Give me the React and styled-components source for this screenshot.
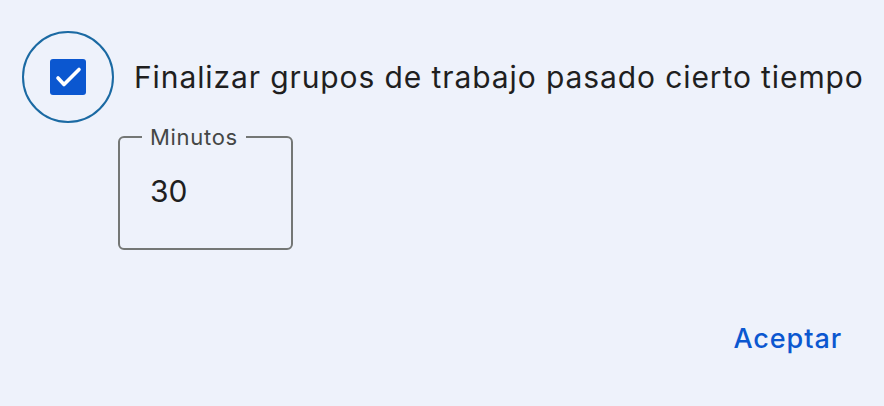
import React from "react";
import styled, { createGlobalStyle } from "styled-components";

const Global = createGlobalStyle`
  html, body { margin: 0; padding: 0; background: #eef2fb; }
  body { font-family: Inter, Roboto, sans-serif; color: #1f1f1f; }
  * { box-sizing: border-box; }
`;

const Page = styled.div`
  width: 884px;
  height: 406px;
  padding: 31px 0 0 22px;
  display: flex;
  flex-direction: column;
`;

const Row = styled.label`
  display: flex;
  align-items: center;
  gap: 20px;
  cursor: pointer;
`;

const Halo = styled.span`
  width: 92px;
  height: 92px;
  border-radius: 50%;
  border: 2px solid #1b6aa3;
  display: flex;
  align-items: center;
  justify-content: center;
  flex-shrink: 0;
`;

const Box = styled.span`
  width: 36px;
  height: 36px;
  border-radius: 3px;
  background: #0b57d0;
  display: block;
`;

const LabelText = styled.span`
  font-size: 30px;
  line-height: 40px;
  letter-spacing: 0.9px;
  color: #1f1f1f;
`;

const Field = styled.fieldset`
  margin: 2px 0 0 96px;
  width: 175px;
  height: 125px;
  border: 2px solid #747775;
  border-radius: 6px;
  padding: 0 0 0 22px;
`;

const Legend = styled.legend`
  padding: 0 8px;
  font-size: 22px;
  line-height: 24px;
  letter-spacing: 0.7px;
  color: #444746;
`;

const Value = styled.div`
  margin: 22px 0 0 8px;
  font-size: 30px;
  line-height: 40px;
  color: #1f1f1f;
`;

const Actions = styled.div`
  display: flex;
  justify-content: flex-end;
  padding-right: 30px;
  margin-top: 64px;
`;

const TextButton = styled.button`
  background: none;
  border: none;
  padding: 0 12px;
  height: 48px;
  font-family: Inter, Roboto, sans-serif;
  font-weight: 500;
  font-size: 27px;
  letter-spacing: 0.9px;
  color: #0b57d0;
  cursor: pointer;
`;

export default function App() {
  return (
    <>
      <Global />
      <Page>
        <Row>
          <Halo>
            <Box>
              <svg width="36" height="36" viewBox="0 0 36 36" fill="none">
                <path d="M8 19l6 6.5L29 10.5" stroke="#fff" strokeWidth="3.6" strokeLinecap="round" strokeLinejoin="round" />
              </svg>
            </Box>
          </Halo>
          <LabelText>Finalizar grupos de trabajo pasado cierto tiempo</LabelText>
        </Row>
        <Field>
          <Legend>Minutos</Legend>
          <Value>30</Value>
        </Field>
        <Actions>
          <TextButton>Aceptar</TextButton>
        </Actions>
      </Page>
    </>
  );
}
